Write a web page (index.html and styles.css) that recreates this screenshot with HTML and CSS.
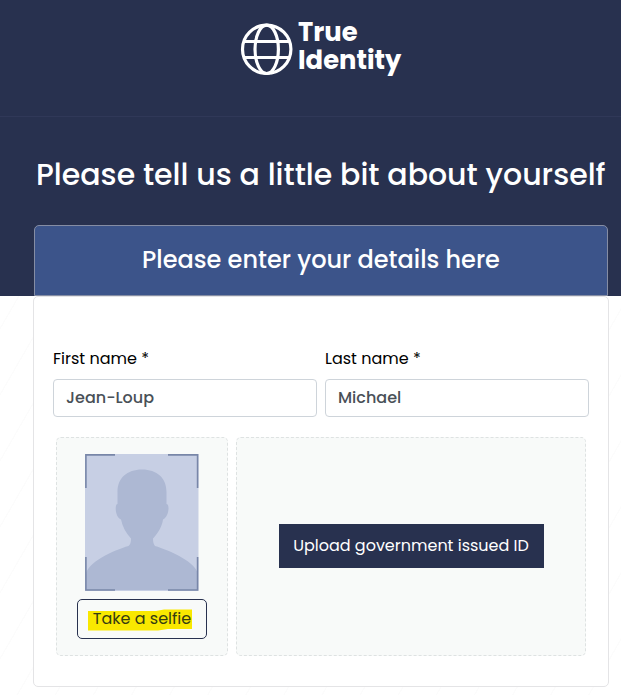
FILE: index.html
```html
<!DOCTYPE html>
<html lang="en">
<head>
<meta charset="utf-8">
<title>True Identity</title>
<link rel="stylesheet" href="styles.css">
</head>
<body>
<header class="topbar">
  <svg class="globe" viewBox="0 0 54 54" fill="none" stroke="#fff" stroke-width="3.2">
    <circle cx="26.700" cy="27.300" r="24.200"/>
    <ellipse cx="26.700" cy="27.300" rx="11.700" ry="24.200"/>
    <path d="M4 19.500H50M4 35.500H50"/>
  </svg>
  <div class="brand">True<br>Identity</div>
</header>
<section class="hero">
  <h1>Please tell us a little bit about yourself</h1>
  <div class="panel-head"><h2>Please enter your details here</h2></div>
</section>
<main class="panel">
  <div class="fields">
    <div class="field"><label for="first">First name *</label><input id="first" value="Jean-Loup"></div>
    <div class="field"><label for="last">Last name *</label><input id="last" value="Michael"></div>
  </div>
  <div class="uploads">
    <div class="box selfie">
      <svg class="portrait" viewBox="0 0 114 137">
        <path fill="#c7cfe4" d="M0 0H113.500V137H0Z"/>
        <path fill="#adb8d3" d="M57 15.5C42 15.5 32.5 24 32.5 38V50C29.5 50 30 63 36 65.500C37.500 73 41 79 46 84.500C46 89 45 91 43.500 92C29 96 1 109 1 121V136H113V121C113 109 84 96 70 92C68.500 90 68 88 68 84.500C73 79 77 73 78 65.500C84 63 85 50 81.500 50V38C81.500 24 72 15.500 57 15.500Z"/>
        <path fill="none" stroke="#7886a8" stroke-width="1.6" d="M30 .9H.9V34M83 .9H112.600V34M.9 103V136H30M83 136H112.600V103"/>
      </svg>
      <button class="take" type="button">
        <svg class="marker" viewBox="0 0 104 22"><path fill="#f9e800" d="M0 2H68L76 .5H104V20H80L70 21.500H0Z"/></svg>
        <span>Take a selfie</span>
      </button>
    </div>
    <div class="box document"><button class="upload" type="button">Upload government issued ID</button></div>
  </div>
</main>
</body>
</html>
```
FILE: styles.css
```css
* { box-sizing: border-box; }
body {
  margin: 0;
  height: 695px;
  overflow: hidden;
  font-family: Poppins, Inter, sans-serif;
  font-size: 16px;
  color: #000;
  background: repeating-linear-gradient(120deg, #fff 0 31.500px, #fcfcfc 32px 33px);
}
.topbar {
  height: 117px;
  padding: 21px 0 0 240px;
  display: flex;
  gap: 4px;
  background: #28314f;
  border-bottom: 1px solid #303858;
}
.globe { width: 54px; height: 54px; margin-top: 1px; }
.brand {
  color: #fff;
  font-size: 25.8px;
  font-weight: 700;
  line-height: 28px;
  margin-top: -3px;
}
.hero {
  height: 179px;
  padding: 33px 13px 0 34px;
  background: #28314f;
  color: #fff;
}
h1, h2 { margin: 0; font-weight: 500; white-space: nowrap; }
h1 {
  height: 50px;
  padding-left: 2px;
  font-size: 30px;
  line-height: 50px;
}
.panel-head {
  height: 71px;
  margin-top: 25px;
  padding-bottom: 2px;
  border: 1px solid #858da4;
  border-radius: 5px 5px 0 0;
  background: #3c548a;
  display: flex;
  align-items: center;
  justify-content: center;
}
h2 { font-size: 24px; line-height: 36px; }
.panel {
  margin: 0 12px 0 33px;
  height: 391px;
  padding: 50px 19px 0;
  background: #fff;
  border: 1px solid #e4e4e6;
  border-radius: 5px;
}
.fields { display: flex; gap: 8px; }
.field { width: 264px; }
label { display: block; height: 24px; line-height: 24px; white-space: nowrap; }
input {
  display: block;
  width: 100%;
  height: 38px;
  margin: 8px 0 0;
  padding: 0 12px 2px;
  border: 1px solid #ced4da;
  border-radius: 4px;
  background: #fff;
  font: 500 16px Poppins, Inter, sans-serif;
  color: #495057;
}
.uploads { display: flex; gap: 8px; margin: 20px 0 0 3px; }
.box {
  height: 219px;
  border: 1px dashed #dee2e2;
  border-radius: 5px;
  background: #f8faf9;
  display: flex;
  align-items: center;
}
.selfie { width: 172px; flex-direction: column; padding-top: 16px; }
.document { width: 350px; justify-content: center; padding-bottom: 2px; }
.portrait { width: 114px; height: 137px; }
button { font: 400 16px Poppins, Inter, sans-serif; padding: 0; white-space: nowrap; }
.take {
  position: relative;
  width: 130px;
  height: 40px;
  margin-top: 8px;
  padding-bottom: 2px;
  border: 1px solid #28314f;
  border-radius: 5px;
  background: transparent;
  color: #343b12;
}
.take span { position: relative; }
.marker { position: absolute; left: 10px; top: 9px; width: 104px; height: 22px; }
.upload {
  width: 265px;
  height: 44px;
  border: 0;
  background: #28314f;
  color: #fff;
}
```
